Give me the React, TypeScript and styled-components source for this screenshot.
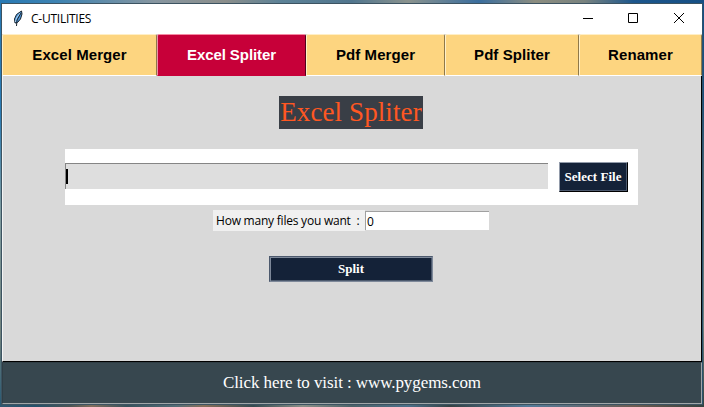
import React from "react";
import styled, { createGlobalStyle } from "styled-components";

const GlobalStyle = createGlobalStyle`
  * { box-sizing: border-box; }
  body { margin: 0; overflow: hidden; }
  button, input { margin: 0; border-radius: 0; outline: none; }
`;

const Desktop = styled.div`
  width: 704px;
  height: 407px;
  padding: 3px 1px 2px 1px;
  background:
    linear-gradient(90deg, #2879b4 0, #3d83b2 8%, #8796a0 22%, #8b8e8b 32%, #5c8297 40%, #51768e 50%, #8b938e 58%, #3a6e9e 68%, #8c8d80 76%, #79837f 83%, #1c568c 90%, #164f84 100%) top / 100% 3px no-repeat,
    linear-gradient(90deg, #315870 0, #24516a 5%, #4b5554 10%, #806e5d 13%, #36515b 18%, #536d76 25%, #876f59 29%, #344b50 36%, #8a9088 43%, #4b6268 50%, #4c7089 58%, #344244 64%, #547b99 75%, #6b5c52 90%, #34423f 100%) bottom / 100% 2px no-repeat,
    linear-gradient(#164f84 0, #1c527d 25%, #4c6572 42%, #70827f 80%, #34423f 100%) right / 2px 100% no-repeat,
    linear-gradient(#2879b4 0, #2c7cb4 28%, #7e9b9f 52%, #71827d 82%, #265873 100%);
`;

const Window = styled.main`
  width: 702px;
  height: 402px;
  display: flex;
  flex-direction: column;
  border: 1px solid #3c5361;
  border-right-color: #2b536d;
  background: #d9d9d9;
`;

const TitleBar = styled.header`
  height: 30px;
  flex: none;
  display: flex;
  align-items: center;
  background: #fff;
  padding-left: 10px;
`;

const Feather = styled.svg`
  width: 12px;
  height: 18px;
`;

const WindowTitle = styled.span`
  margin-left: 7px;
  flex: 1;
  font: 12px/16px "Open Sans", sans-serif;
  letter-spacing: -0.25px;
  color: #000;
`;

const WindowControls = styled.svg`
  width: 138px;
  height: 30px;
`;

const Tabs = styled.nav`
  height: 42px;
  flex: none;
  display: grid;
  grid-template-columns: 155px 149px 139px 134px 123px;
`;

const Tab = styled.button<{ $active?: boolean }>`
  padding: 0;
  border: 1px solid;
  border-color: ${({ $active }) =>
    $active ? "#f58aa3 #53001a #c70039 #ef91a8" : "#ffefc7 #8f7849 #fff #fff0c9"};
  border-top-left-radius: 2px;
  border-top-right-radius: 2px;
  background: ${({ $active }) => ($active ? "#c70039" : "#fdd580")};
  color: ${({ $active }) => ($active ? "#fff" : "#000")};
  font: bold 15px/20px "Liberation Sans", sans-serif;
  letter-spacing: ${({ $active }) => ($active ? "-0.08px" : "0.08px")};
`;

const Page = styled.section`
  height: 286px;
  flex: none;
  display: flex;
  flex-direction: column;
  align-items: center;
  padding: 20px 2px 0 0;
  border-left: 1px solid #f4f4f4;
  border-right: 1px solid #000;
  border-bottom: 1px solid #000;
`;

const Heading = styled.h1`
  width: 144px;
  height: 33px;
  margin: 0;
  background: #393e46;
  color: #ff5722;
  text-align: center;
  font: 27px/32px "Liberation Serif", serif;
  letter-spacing: 0.1px;
  white-space: nowrap;
`;

const FilePanel = styled.div`
  width: 573px;
  height: 56px;
  margin: 20px 0 0 1px;
  padding: 13px 10px 13px 0;
  display: flex;
  align-items: center;
  justify-content: space-between;
  background: #fff;
`;

const FileEntry = styled.div`
  width: 483px;
  height: 26px;
  margin-top: -2px;
  padding-top: 5px;
  border-top: 1px solid #858585;
  border-left: 1px solid #858585;
  background: #dedede;
`;

const Caret = styled.div`
  width: 2px;
  height: 15px;
  background: #000;
`;

const SelectButton = styled.button`
  width: 69px;
  height: 30px;
  padding: 0 1px 0 0;
  border: 1px solid;
  border-color: #929baa #000 #000 #929baa;
  box-shadow: inset -1px -1px #4c596d;
  background: #142238;
  color: #fff;
  font: bold 13px/26px "Liberation Serif", serif;
  letter-spacing: 0.05px;
  white-space: nowrap;
`;

const CountRow = styled.div`
  width: 276px;
  height: 21px;
  margin-top: 5px;
  display: flex;
  align-items: flex-start;
`;

const CountLabel = styled.label`
  width: 152px;
  height: 21px;
  padding-left: 3px;
  background: #f0f0f0;
  color: #000;
  font: 12px/21px "Open Sans", sans-serif;
  letter-spacing: -0.22px;
  white-space: pre;
`;

const CountInput = styled.input`
  width: 124px;
  height: 19px;
  margin-top: 1px;
  padding: 0 0 0 1px;
  border: 0 solid #a0a0a0;
  border-width: 1px 0 0 1px;
  background: #fff;
  color: #000;
  font: 12px/18px "Open Sans", sans-serif;
`;

const SplitButton = styled.button`
  width: 164px;
  height: 26px;
  margin-top: 25px;
  padding: 0;
  border: 1px solid;
  border-color: #4c596d #7d8899 #7d8899 #4c596d;
  box-shadow: inset 1px 1px #7d8899, inset -1px -1px #4c596d;
  background: #142238;
  color: #fff;
  font: bold 13px/20px "Liberation Serif", serif;
`;

const Footer = styled.footer`
  height: 42px;
  flex: none;
  border: 1px solid;
  border-color: #303e45 #a0a6a8 #a0a6a8 #303e45;
  background: #37474f;
  color: #fff;
  text-align: center;
  font: 17px/40px "Liberation Serif", serif;
  letter-spacing: -0.08px;
`;

const tabs = ["Excel Merger", "Excel Spliter", "Pdf Merger", "Pdf Spliter", "Renamer"];

export default function App() {
  return (
    <>
      <GlobalStyle />
      <Desktop>
        <Window>
          <TitleBar>
            <Feather viewBox="0 0 12 18">
              <path d="M9.5 1 L10 4 L8.5 9 L5.5 12.5 L3 13 L2.5 9 L4.5 4.5 Z" fill="#4b94d8" stroke="#17232e" />
              <path d="M8.2 3 L4.5 8 L3.5 12" fill="none" stroke="#b5d9f5" />
              <path d="M9 3 L5 10 L4.5 16" fill="none" stroke="#18222b" />
            </Feather>
            <WindowTitle>C-UTILITIES</WindowTitle>
            <WindowControls viewBox="0 0 138 30" fill="none" stroke="#000">
              <path d="M19 14.5h10M64.5 9.5h9v9h-9zM110 9l10 10M120 9l-10 10" />
            </WindowControls>
          </TitleBar>
          <Tabs>
            {tabs.map((name) => (
              <Tab key={name} $active={name === "Excel Spliter"}>{name}</Tab>
            ))}
          </Tabs>
          <Page>
            <Heading>Excel Spliter</Heading>
            <FilePanel>
              <FileEntry><Caret /></FileEntry>
              <SelectButton>Select File</SelectButton>
            </FilePanel>
            <CountRow>
              <CountLabel htmlFor="count">How many files you want  :</CountLabel>
              <CountInput id="count" defaultValue="0" />
            </CountRow>
            <SplitButton>Split</SplitButton>
          </Page>
          <Footer>Click here to visit : www.pygems.com</Footer>
        </Window>
      </Desktop>
    </>
  );
}
